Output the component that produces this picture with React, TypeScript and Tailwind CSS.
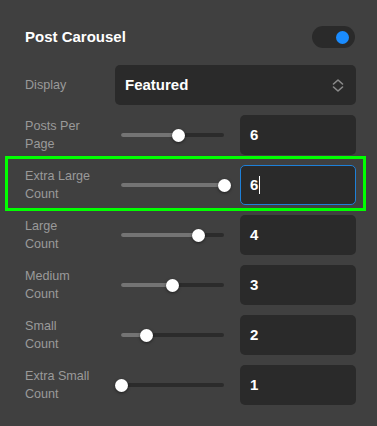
const font = { fontFamily: '"Liberation Sans", Arial, sans-serif' };

type Row = { label: string[]; value: number; min: number; max: number; focused?: boolean };

const rows: Row[] = [
  { label: ["Posts Per", "Page"], value: 6, min: 1, max: 10 },
  { label: ["Extra Large", "Count"], value: 6, min: 1, max: 5, focused: true },
  { label: ["Large", "Count"], value: 4, min: 1, max: 5 },
  { label: ["Medium", "Count"], value: 3, min: 1, max: 5 },
  { label: ["Small", "Count"], value: 2, min: 1, max: 5 },
  { label: ["Extra Small", "Count"], value: 1, min: 1, max: 5 },
];

function Slider({ value, min, max }: { value: number; min: number; max: number }) {
  const pct = Math.min(1, Math.max(0, (value - min) / (max - min)));
  const px = pct * 103;
  return (
    <div className="relative h-[14px] w-[103px] shrink-0">
      <div className="absolute left-0 right-0 top-[5px] h-[4px] rounded-full bg-[#2b2b2b]" />
      <div
        className="absolute left-0 top-[5px] h-[4px] rounded-full bg-[#747474]"
        style={{ width: px }}
      />
      <div
        className="absolute top-[0.5px] h-[13px] w-[13px] rounded-full bg-white shadow-[0_1px_3px_rgba(0,0,0,0.5)]"
        style={{ left: px - 6.5 }}
      />
    </div>
  );
}

export default function App() {
  return (
    <div className="min-h-[426px] w-full bg-[#404040] pl-[25px] pr-[21px] pt-[26px]" style={font}>
      <div className="flex h-[22px] items-center justify-between">
        <div className="text-[15px] font-bold text-white">Post Carousel</div>
        <div className="mr-[1px] flex h-[22px] w-[43px] items-center justify-end rounded-full bg-[#2a2a2a] pr-[6px]">
          <div className="h-[13px] w-[13px] rounded-full bg-[#1a8cff]" />
        </div>
      </div>

      <div className="mt-[17px] flex h-10 items-center">
        <div className="w-[90px] text-[12.6px] text-[#9a9a9a]">Display</div>
        <div className="flex h-10 flex-1 items-center justify-between rounded-[5px] bg-[#2a2a2a] pl-[10px] pr-[12px]">
          <span className="text-[15px] font-bold text-white">Featured</span>
          <svg width="12" height="13" viewBox="0 0 12 13" fill="none" stroke="#8a8a8a" strokeWidth="1.6" strokeLinecap="round" strokeLinejoin="round">
            <path d="M1.5 5 6 1 10.5 5" />
            <path d="M1.5 8 6 12 10.5 8" />
          </svg>
        </div>
      </div>

      {rows.map((r) => (
        <div key={r.label.join(" ")} className="relative mt-[10px] flex h-10 items-center">
          {r.focused && (
            <div className="pointer-events-none absolute -bottom-[6px] -left-[20px] -right-[10px] -top-[9px] border-[3px] border-[#00ff00]" />
          )}
          <div className="w-[96px] text-[12.6px] leading-[18px] text-[#9a9a9a]">
            <div>{r.label[0]}</div>
            <div>{r.label[1]}</div>
          </div>
          <Slider value={r.value} min={r.min} max={r.max} />
          <div
            className={
              r.focused
                ? "ml-[16px] flex h-10 flex-1 items-center rounded-[5px] border border-[#1e80d8] bg-[#2a2a2a] pl-[9px]"
                : "ml-[16px] flex h-10 flex-1 items-center rounded-[5px] border border-transparent bg-[#2a2a2a] pl-[9px]"
            }
          >
            <span className="text-[15px] font-bold text-white">{r.value}</span>
            {r.focused && <span className="ml-[1px] h-[18px] w-[1px] bg-white" />}
          </div>
        </div>
      ))}
    </div>
  );
}
